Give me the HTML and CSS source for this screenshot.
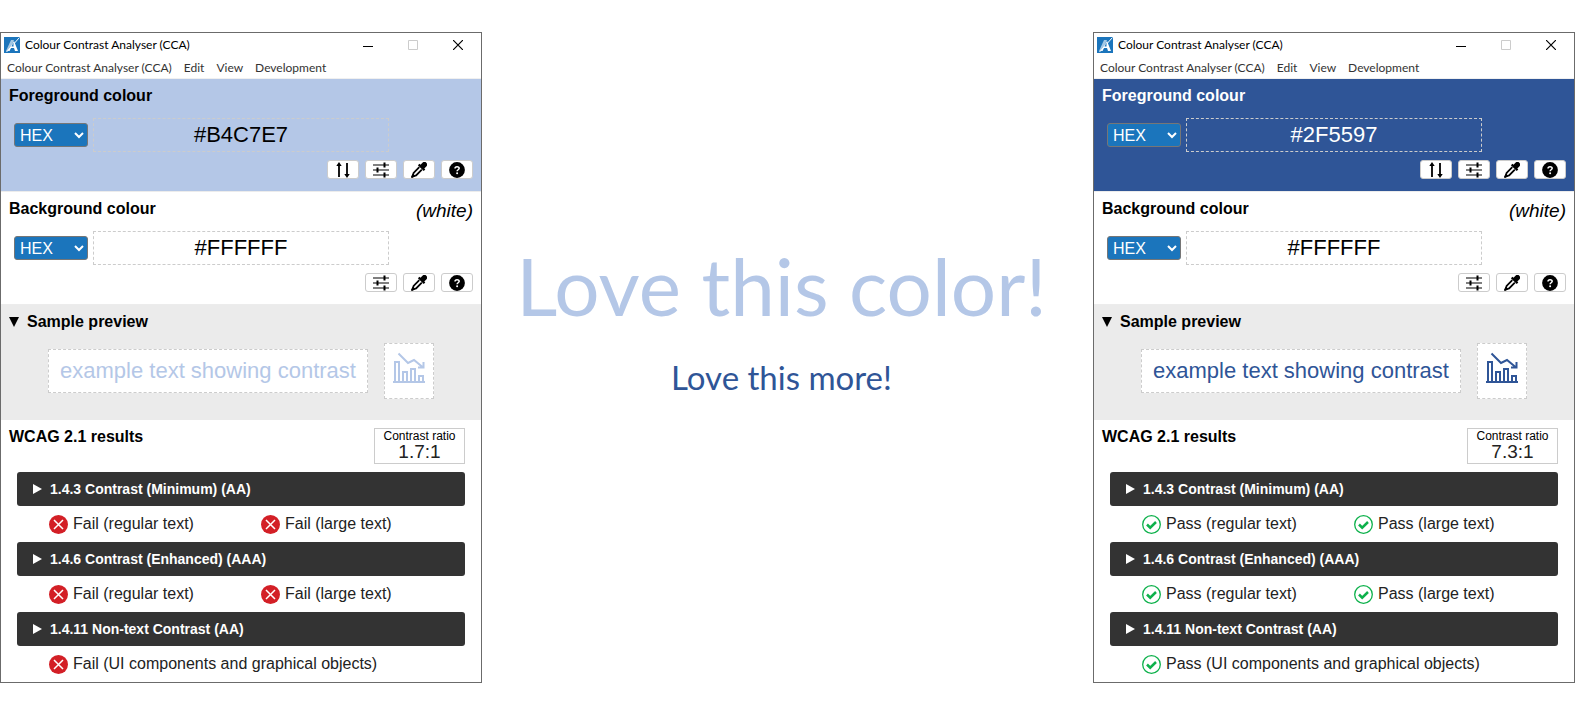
FILE: index.html
```html
<!DOCTYPE html>
<html lang="en">
<head>
<meta charset="utf-8">
<meta name="viewport" content="width=device-width, initial-scale=1">
<title>Colour Contrast Analyser (CCA)</title>
<link rel="stylesheet" href="styles.css">
</head>
<body>
<svg class="sprite" aria-hidden="true">
  <symbol id="logo" viewBox="0 0 16 16">
    <rect width="16" height="16" fill="#1b75bc"/>
    <path d="M2 14 7 3h3L5 14z" fill="#fff" opacity=".6"/>
    <path d="M10 4l4 10h-3l-1-3H7l-1.500 3H4z" fill="#fff"/>
    <path d="M15.500.5 2.500 15" stroke="#fff" stroke-width="1"/>
    <path d="M9.500 5.500v4h-2z" fill="#1b75bc"/>
  </symbol>
  <symbol id="swap" viewBox="0 0 16 16">
    <path d="M4 15V3M12 1v12" stroke="#000" stroke-width="1.800" fill="none"/>
    <path d="M4 0 1.300 4h5.400zM12 16 9.300 12h5.400z"/>
  </symbol>
  <symbol id="sliders" viewBox="0 0 16 16">
    <path d="M0 3h16M0 8h16M0 13h16" stroke="#000" stroke-width="1.200"/>
    <path d="M11.500.5v5M4.500 5.500v5M11.500 10.500v5" stroke="#000" stroke-width="2"/>
  </symbol>
  <symbol id="dropper" viewBox="0 0 16 16">
    <path d="M15.300.7a2.700 2.700 0 0 0-3.800 0L9.500 2.700l-1-1L6.900 3.300l5.800 5.800 1.600-1.600-1-1 2-2a2.700 2.700 0 0 0 0-3.800z"/>
    <path d="M8.300 5.200 2.600 10.900 1.500 14.500l3.600-1.100 5.700-5.700" fill="none" stroke="#000" stroke-width="1.800"/>
    <path d="M0 15l1.500-3 2.500 2.500L1 16z"/>
  </symbol>
  <symbol id="help" viewBox="0 0 16 16">
    <circle cx="8" cy="8" r="7.900"/>
    <path d="M6 6.500C6 4 10.200 4.100 10.200 6.300c0 1.400-2.100 1.500-2.100 2.900" fill="none" stroke="#fff" stroke-width="1.500"/>
    <circle cx="8.100" cy="11.300" r="1" fill="#fff"/>
  </symbol>
  <symbol id="chart" viewBox="0 0 32 32">
    <path d="M0 30h32M2 30V10h4v20M10 30V20h4v10M18 30V17h4v13M26 30v-6h4v6" fill="none" stroke="currentColor" stroke-width="2"/>
    <path d="M5.500 1.500 15 11l6-3 8.500 7M30.500 10v5.500H25" fill="none" stroke="currentColor" stroke-width="2"/>
  </symbol>
  <symbol id="fail" viewBox="0 0 19 19">
    <circle cx="9.500" cy="9.500" r="9.500" fill="#d31f26"/>
    <path d="m5 5 9 9m0-9-9 9" stroke="#fff" stroke-width="1.500"/>
  </symbol>
  <symbol id="pass" viewBox="0 0 19 19">
    <circle cx="9.500" cy="9.500" r="8.800" fill="#fff" stroke="#0db14b" stroke-width="1.300"/>
    <path d="m5 9.500 3.200 3.200L14 7" fill="none" stroke="#0db14b" stroke-width="2.500"/>
  </symbol>
  <symbol id="down" viewBox="0 0 10 10"><path d="M0 0h10L5 10z"/></symbol>
  <symbol id="right" viewBox="0 0 9 10"><path d="M0 0v10l9-5z" fill="currentColor"/></symbol>
  <symbol id="minimise" viewBox="0 0 10 10"><path d="M0 6.500h10" stroke="#000"/></symbol>
  <symbol id="maximise" viewBox="0 0 10 10"><path d="M.5.5h9v9h-9z" fill="none" stroke="#ccc"/></symbol>
  <symbol id="close" viewBox="0 0 10 10"><path d="m0 0 10 10M10 0 0 10" stroke="#000" stroke-width="1.200"/></symbol>
</svg>

<section class="window light" aria-label="Analyser with light blue">
  <header class="titlebar">
    <svg class="logo"><use href="#logo"/></svg>
    <span class="title">Colour Contrast Analyser (CCA)</span>
    <button class="control" aria-label="Minimise"><svg><use href="#minimise"/></svg></button>
    <button class="control" aria-label="Maximise" disabled><svg><use href="#maximise"/></svg></button>
    <button class="control" aria-label="Close"><svg><use href="#close"/></svg></button>
  </header>
  <nav class="menu">
    <button>Colour Contrast Analyser (CCA)</button><button>Edit</button><button>View</button><button>Development</button>
  </nav>
  <section class="colour foreground">
    <div class="heading"><h2><label for="fg1">Foreground colour</label></h2></div>
    <div class="entry">
      <select aria-label="Foreground format"><option>HEX</option></select>
      <input id="fg1" type="text" value="#B4C7E7">
    </div>
    <div class="tools">
      <button aria-label="Swap colours"><svg><use href="#swap"/></svg></button>
      <button aria-label="Sliders"><svg><use href="#sliders"/></svg></button>
      <button aria-label="Pick colour"><svg><use href="#dropper"/></svg></button>
      <button aria-label="Help"><svg><use href="#help"/></svg></button>
    </div>
  </section>
  <section class="colour">
    <div class="heading"><h2><label for="bg1">Background colour</label></h2><em>(white)</em></div>
    <div class="entry">
      <select aria-label="Background format"><option>HEX</option></select>
      <input id="bg1" type="text" value="#FFFFFF">
    </div>
    <div class="tools">
      <button aria-label="Sliders"><svg><use href="#sliders"/></svg></button>
      <button aria-label="Pick colour"><svg><use href="#dropper"/></svg></button>
      <button aria-label="Help"><svg><use href="#help"/></svg></button>
    </div>
  </section>
  <details class="preview" open>
    <summary><svg><use href="#down"/></svg>Sample preview</summary>
    <div class="samples">
      <span class="sample-text">example text showing contrast</span>
      <span class="sample-icon"><svg><use href="#chart"/></svg></span>
    </div>
  </details>
  <section class="results">
    <div class="summary">
      <h2>WCAG 2.1 results</h2>
      <div class="ratio"><span>Contrast ratio</span><strong>1.7:1</strong></div>
    </div>
    <button class="criterion"><svg><use href="#right"/></svg>1.4.3 Contrast (Minimum) (AA)</button>
    <ul>
      <li><svg><use href="#fail"/></svg>Fail (regular text)</li>
      <li><svg><use href="#fail"/></svg>Fail (large text)</li>
    </ul>
    <button class="criterion"><svg><use href="#right"/></svg>1.4.6 Contrast (Enhanced) (AAA)</button>
    <ul>
      <li><svg><use href="#fail"/></svg>Fail (regular text)</li>
      <li><svg><use href="#fail"/></svg>Fail (large text)</li>
    </ul>
    <button class="criterion"><svg><use href="#right"/></svg>1.4.11 Non-text Contrast (AA)</button>
    <ul>
      <li class="wide"><svg><use href="#fail"/></svg>Fail (UI components and graphical objects)</li>
    </ul>
  </section>
</section>

<main class="message">
  <h1>Love this color!</h1>
  <p>Love this more!</p>
</main>

<section class="window dark" aria-label="Analyser with dark blue">
  <header class="titlebar">
    <svg class="logo"><use href="#logo"/></svg>
    <span class="title">Colour Contrast Analyser (CCA)</span>
    <button class="control" aria-label="Minimise"><svg><use href="#minimise"/></svg></button>
    <button class="control" aria-label="Maximise" disabled><svg><use href="#maximise"/></svg></button>
    <button class="control" aria-label="Close"><svg><use href="#close"/></svg></button>
  </header>
  <nav class="menu">
    <button>Colour Contrast Analyser (CCA)</button><button>Edit</button><button>View</button><button>Development</button>
  </nav>
  <section class="colour foreground">
    <div class="heading"><h2><label for="fg2">Foreground colour</label></h2></div>
    <div class="entry">
      <select aria-label="Foreground format"><option>HEX</option></select>
      <input id="fg2" type="text" value="#2F5597">
    </div>
    <div class="tools">
      <button aria-label="Swap colours"><svg><use href="#swap"/></svg></button>
      <button aria-label="Sliders"><svg><use href="#sliders"/></svg></button>
      <button aria-label="Pick colour"><svg><use href="#dropper"/></svg></button>
      <button aria-label="Help"><svg><use href="#help"/></svg></button>
    </div>
  </section>
  <section class="colour">
    <div class="heading"><h2><label for="bg2">Background colour</label></h2><em>(white)</em></div>
    <div class="entry">
      <select aria-label="Background format"><option>HEX</option></select>
      <input id="bg2" type="text" value="#FFFFFF">
    </div>
    <div class="tools">
      <button aria-label="Sliders"><svg><use href="#sliders"/></svg></button>
      <button aria-label="Pick colour"><svg><use href="#dropper"/></svg></button>
      <button aria-label="Help"><svg><use href="#help"/></svg></button>
    </div>
  </section>
  <details class="preview" open>
    <summary><svg><use href="#down"/></svg>Sample preview</summary>
    <div class="samples">
      <span class="sample-text">example text showing contrast</span>
      <span class="sample-icon"><svg><use href="#chart"/></svg></span>
    </div>
  </details>
  <section class="results">
    <div class="summary">
      <h2>WCAG 2.1 results</h2>
      <div class="ratio"><span>Contrast ratio</span><strong>7.3:1</strong></div>
    </div>
    <button class="criterion"><svg><use href="#right"/></svg>1.4.3 Contrast (Minimum) (AA)</button>
    <ul>
      <li><svg><use href="#pass"/></svg>Pass (regular text)</li>
      <li><svg><use href="#pass"/></svg>Pass (large text)</li>
    </ul>
    <button class="criterion"><svg><use href="#right"/></svg>1.4.6 Contrast (Enhanced) (AAA)</button>
    <ul>
      <li><svg><use href="#pass"/></svg>Pass (regular text)</li>
      <li><svg><use href="#pass"/></svg>Pass (large text)</li>
    </ul>
    <button class="criterion"><svg><use href="#right"/></svg>1.4.11 Non-text Contrast (AA)</button>
    <ul>
      <li class="wide"><svg><use href="#pass"/></svg>Pass (UI components and graphical objects)</li>
    </ul>
  </section>
</section>
</body>
</html>
```

FILE: styles.css
```css
* { box-sizing: border-box; }

body {
  margin: 0;
  padding: 32px 0;
  display: flex;
  align-items: flex-start;
  background: #fff;
  color: #000;
  font: 16px/20px "Liberation Sans", Arial, sans-serif;
}

svg { display: block; flex: none; overflow: visible; }
.sprite { display: none; }
button, input, select { margin: 0; font: inherit; color: inherit; }
h1, h2, p, ul { margin: 0; padding: 0; }
h2 { font-size: 16px; line-height: 20px; }

.window {
  flex: 0 1 482px;
  min-width: 420px;
  border: 1px solid #6b6b6b;
  background: #fff;
}
.light { --tint: #b4c7e7; --on-tint: #000; }
.dark { --tint: #2f5597; --on-tint: #fff; }

/* Title bar and menu */
.titlebar {
  display: flex;
  align-items: center;
  height: 24px;
  padding-left: 3px;
  font: 12px/24px Lato, sans-serif;
}
.logo { width: 16px; height: 16px; margin-right: 5px; }
.title { flex: 1; }
.control {
  width: 45px;
  height: 24px;
  padding: 0 17px;
  border: 0;
  background: none;
}
.control svg { width: 10px; height: 10px; }
.menu {
  display: flex;
  height: 22px;
  border-bottom: 1px solid #f0f0f0;
  color: #333;
  font: 12px/22px Lato, sans-serif;
}
.menu button { padding: 0 6px; border: 0; background: none; }

/* Colour panels */
.colour {
  padding: 7px 8px 12px;
  border-bottom: 1px solid #ececec;
}
.foreground { background: var(--tint); color: var(--on-tint); }
.heading { display: flex; justify-content: space-between; }
.heading em { font-size: 19px; line-height: 24px; height: 20px; }
.entry {
  display: flex;
  align-items: center;
  gap: 5px;
  padding: 12px 84px 8px 5px;
}
.entry select {
  width: 74px;
  height: 24px;
  padding: 0 1px;
  border: 1px solid #767676;
  border-radius: 3px;
  background-color: #1b75bc;
  color: #fff;
}
.entry input {
  flex: 1;
  min-width: 0;
  height: 34px;
  padding: 0;
  border: 1px dashed #ccc;
  background: none;
  font-size: 22px;
  text-align: center;
}
.tools { display: flex; justify-content: flex-end; gap: 6px; }
.tools button {
  display: grid;
  place-items: center;
  width: 32px;
  height: 19px;
  padding: 0;
  border: 1px solid #ccc;
  border-radius: 3px;
  background: #fff;
  color: #000;
}
.tools svg { width: 16px; height: 16px; }

/* Sample preview */
.preview { padding: 7px 8px 21px; background: #ebebeb; }
.preview summary {
  display: flex;
  align-items: center;
  gap: 8px;
  font-weight: bold;
  list-style: none;
}
.preview summary svg { width: 10px; height: 10px; }
.samples {
  display: flex;
  align-items: center;
  justify-content: center;
  gap: 16px;
  padding-top: 11px;
}
.sample-text, .sample-icon {
  border: 1px dashed #ccc;
  background: #fff;
  color: var(--tint);
}
.sample-text {
  width: 320px;
  font-size: 22px;
  line-height: 42px;
  text-align: center;
}
.sample-icon { padding: 8px 8px 14px; }
.sample-icon svg { width: 32px; height: 32px; }

/* Results */
.results { padding: 8px; }
.summary {
  display: flex;
  justify-content: space-between;
  padding: 0 8px 8px 0;
}
.summary h2 { line-height: 18px; }
.ratio {
  width: 91px;
  height: 36px;
  border: 1px solid #ccc;
  text-align: center;
}
.ratio span { display: block; font-size: 12px; line-height: 14px; }
.ratio strong {
  display: block;
  color: #222;
  font-size: 19px;
  font-weight: normal;
  line-height: 18px;
}
.criterion {
  display: flex;
  align-items: center;
  gap: 8px;
  width: calc(100% - 16px);
  height: 34px;
  margin: 0 8px;
  padding: 0 16px;
  border: 0;
  border-radius: 3px;
  background: #333;
  color: #fff;
  font-size: 14px;
  font-weight: bold;
}
.criterion svg { width: 9px; height: 10px; }
.results ul {
  display: grid;
  grid-template-columns: 1fr 1fr;
  padding: 8px 0 8px 40px;
  list-style: none;
}
.results ul:last-child { padding-bottom: 0; }
.results li { display: flex; align-items: center; gap: 5px; color: #222; }
.results li svg { width: 19px; height: 19px; }
.results .wide { grid-column: span 2; }

/* Message between the windows */
.message {
  flex: 1;
  min-width: 0;
  padding: 192px 12px 0 0;
  font-family: Lato, sans-serif;
  text-align: center;
  white-space: nowrap;
}
.message h1 {
  color: #b4c7e7;
  font-size: 80px;
  font-weight: normal;
  line-height: 122px;
}
.message p {
  color: #2f5597;
  font-size: 33px;
  line-height: 62px;
}
```
